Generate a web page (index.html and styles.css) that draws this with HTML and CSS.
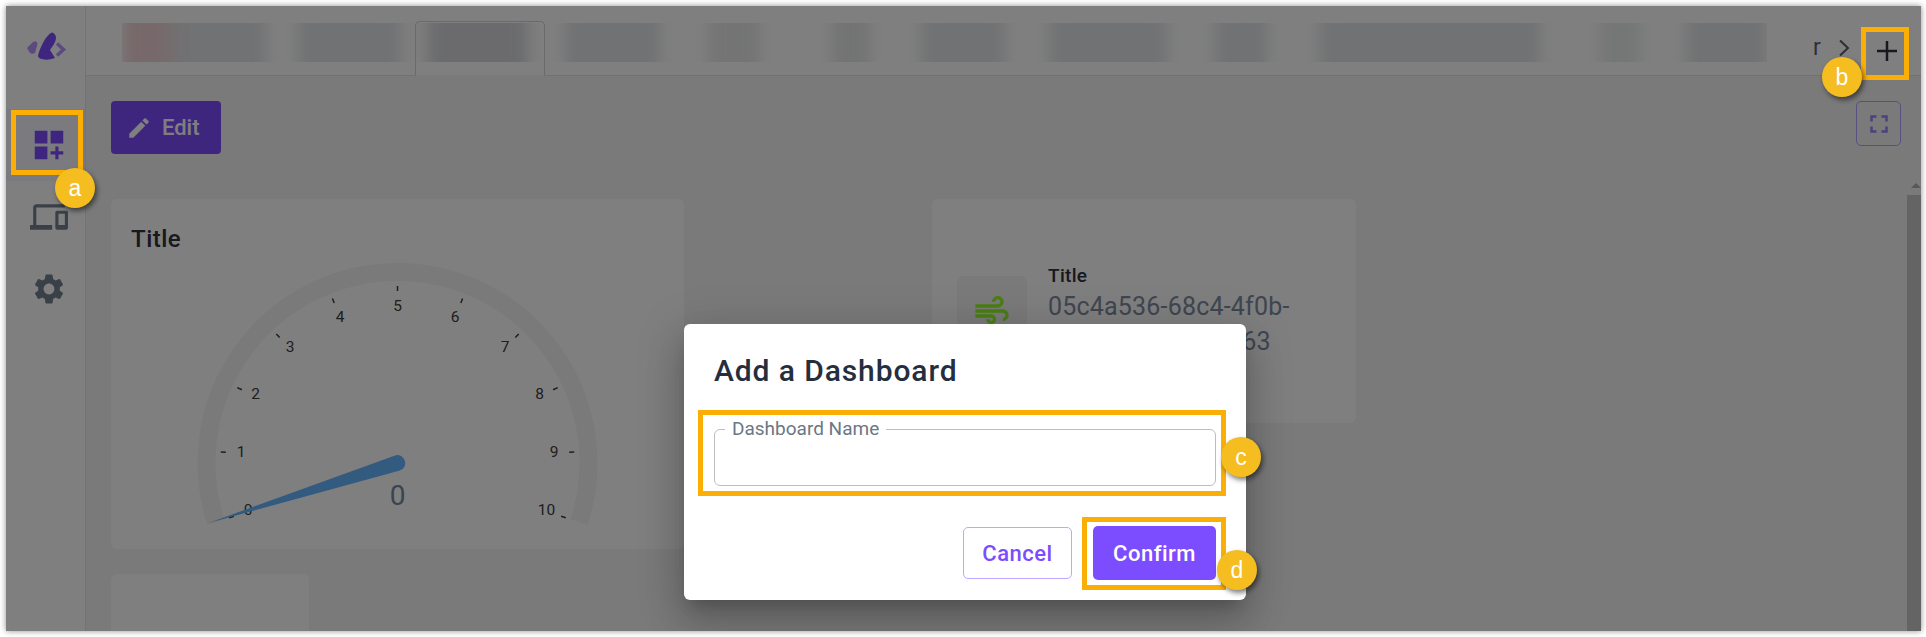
FILE: index.html
```html
<!DOCTYPE html>
<html lang="en">
<head>
  <meta charset="UTF-8" />
  <title>Add a Dashboard</title>
  <link rel="stylesheet" href="styles.css">
</head>
<body>
  <div class="frame">
    <aside class="sidebar">
      <div class="logo">
        <svg width="70" height="60" viewBox="0 0 70 60">
          <path class="logo-light" d="M16 28 L22 22 Q26 20 26.500 24 L24 33 Q21 34.500 19 33 Z"/>
          <path class="logo-dark" d="M27 36 Q28 30 33 21 Q37 14 41 12.500 Q44 13 45 17 Q45 22 41 27 L39 30 L44 38 Q36 41 31 39 Q28 39 27 36 Z"/>
          <path class="logo-chevron" d="M46 23.500 L52.500 29.500 L46 35.500"/>
        </svg>
      </div>
      <a class="nav-item active">
        <svg width="38" height="38" viewBox="0 0 24 24"><path d="M3 3h8v8H3zm10 0h8v8h-8zM3 13h8v8H3zm15 0h-2v3h-3v2h3v3h2v-3h3v-2h-3z"/></svg>
      </a>
      <a class="nav-item">
        <svg width="38" height="38" viewBox="0 0 24 24"><path d="M4 6h18V4H4c-1.100 0-2 .9-2 2v11H0v3h14v-3H4V6zm19 2h-6c-.55 0-1 .45-1 1v10c0 .55.45 1 1 1h6c.55 0 1-.45 1-1V9c0-.55-.45-1-1-1zm-1 9h-4v-7h4v7z"/></svg>
      </a>
      <a class="nav-item">
        <svg width="36" height="36" viewBox="0 0 24 24"><path d="M19.140 12.940c.04-.3.06-.61.06-.94 0-.32-.02-.64-.07-.94l2.030-1.580c.18-.14.23-.41.12-.61l-1.920-3.320c-.12-.22-.37-.29-.59-.22l-2.390.96c-.5-.38-1.030-.7-1.620-.94l-.36-2.540c-.04-.24-.24-.41-.48-.41h-3.840c-.24 0-.43.17-.47.41l-.36 2.540c-.59.24-1.130.57-1.620.94l-2.390-.96c-.22-.08-.47 0-.59.22L2.740 8.870c-.12.21-.08.47.12.61l2.030 1.580c-.05.3-.09.63-.09.94s.02.64.07.94l-2.030 1.580c-.18.14-.23.41-.12.61l1.920 3.320c.12.22.37.29.59.22l2.390-.96c.5.38 1.030.7 1.620.94l.36 2.540c.05.24.24.41.48.41h3.840c.24 0 .44-.17.47-.41l.36-2.540c.59-.24 1.130-.56 1.620-.94l2.390.96c.22.08.47 0 .59-.22l1.920-3.320c.12-.22.07-.47-.12-.61l-2.010-1.580zM12 15.600c-1.980 0-3.600-1.620-3.600-3.600s1.620-3.600 3.600-3.600 3.600 1.620 3.600 3.600-1.620 3.600-3.600 3.600z"/></svg>
      </a>
    </aside>

    <main class="main">
      <header class="tabbar">
        <div class="tabs">
          <span class="blob t1"></span>
          <span class="blob t2"></span>
          <span class="blob t3"></span>
          <span class="blob t4"></span>
          <span class="blob t5"></span>
          <span class="blob t6"></span>
          <span class="blob t7"></span>
          <span class="blob t8"></span>
          <span class="blob t9"></span>
          <span class="blob t10"></span>
          <span class="blob t11"></span>
          <span class="blob t12"></span>
        </div>
        <span class="tab-rest">r</span>
        <svg class="tab-next" width="12" height="18" viewBox="0 0 12 18"><path d="M2 1.500 L10 9 L2 16.500"/></svg>
        <svg class="tab-add" width="22" height="22" viewBox="0 0 22 22"><path d="M11 1 V21 M1 11 H21"/></svg>
        <span class="tab-active"></span>
      </header>

      <div class="toolbar">
        <button class="btn-edit">
          <svg width="26" height="26" viewBox="0 0 24 24"><path d="M3 17.250V21h3.750L17.810 9.940l-3.750-3.750L3 17.250zM20.710 7.040c.39-.39.39-1.020 0-1.410l-2.340-2.340c-.39-.39-1.020-.39-1.410 0l-1.830 1.830 3.750 3.750 1.830-1.830z"/></svg>
          Edit
        </button>
        <button class="btn-full">
          <svg width="30" height="30" viewBox="0 0 24 24"><path d="M7 14H5v5h5v-2H7v-3zm-2-4h2V7h3V5H5v5zm12 7h-3v2h5v-5h-2v3zM14 5v2h3v3h2V5h-5z"/></svg>
        </button>
      </div>

      <div class="widgets">
        <section class="card card-gauge">
          <h3>Title</h3>
          <svg class="gauge" width="573" height="297" viewBox="-286.500 -211 573 297">
            <path class="track" d="M-181.650 59.020 A191 191 0 1 1 181.650 59.020"/>
            <path class="ticks" d="M-163.600 53.200 L-168.300 54.700 M-171.700 -10.800 L-176.700 -11.100 M-155.600 -73.200 L-160.200 -75.400 M-117.800 -125.400 L-121.200 -129 M-63.300 -160 L-65.100 -164.600 M0 -172 L0 -177 M63.300 -160 L65.100 -164.600 M117.800 -125.400 L121.200 -129 M155.600 -73.200 L160.200 -75.400 M171.700 -10.800 L176.700 -11.100 M163.600 53.200 L168.300 54.700"/>
            <g class="labels">
              <text x="-149.500" y="47">0</text>
              <text x="-156.500" y="-11">1</text>
              <text x="-142" y="-69">2</text>
              <text x="-107.500" y="-116">3</text>
              <text x="-57.500" y="-146">4</text>
              <text x="0" y="-157">5</text>
              <text x="57.500" y="-146">6</text>
              <text x="107.500" y="-116">7</text>
              <text x="142" y="-69">8</text>
              <text x="156.500" y="-11">9</text>
              <text x="149" y="47">10</text>
            </g>
            <path class="needle" d="M-189 60 L-2.420 -7.620 A8 8 0 0 1 2.420 7.620 Z"/>
            <text class="gauge-value" x="0" y="32">0</text>
          </svg>
        </section>

        <section class="card card-info">
          <div class="info-icon">
            <svg width="40" height="40" viewBox="0 0 24 24"><path d="M14.500 17c0 1.650-1.350 3-3 3s-3-1.350-3-3h2c0 .55.45 1 1 1s1-.45 1-1-.45-1-1-1H2v-2h9.500c1.650 0 3 1.350 3 3zM19 6.500C19 4.570 17.430 3 15.500 3S12 4.570 12 6.500h2c0-.83.67-1.500 1.500-1.500s1.500.67 1.500 1.500S16.330 8 15.500 8H2v2h13.500c1.930 0 3.500-1.570 3.500-3.500zm-.5 4.500H2v2h16.500c.83 0 1.500.67 1.500 1.500s-.67 1.500-1.500 1.500v2c1.930 0 3.500-1.570 3.500-3.500S20.430 11 18.500 11z"/></svg>
          </div>
          <div class="info-text">
            <h4>Title</h4>
            <p>05c4a536-68c4-4f0b-9f3e-27c1d04b8f63</p>
          </div>
        </section>

        <section class="card card-small"></section>
      </div>

      <div class="scrollbar">
        <span class="scroll-arrow"></span>
        <span class="scroll-thumb"></span>
      </div>
    </main>

    <div class="overlay"></div>

    <div class="modal">
      <h2>Add a Dashboard</h2>
      <div class="field">
        <label for="dash_name">Dashboard Name</label>
        <input type="text" id="dash_name" />
      </div>
      <div class="actions">
        <button class="btn-cancel">Cancel</button>
        <button class="btn-confirm">Confirm</button>
      </div>
    </div>

    <span class="mark mark-a"></span>
    <span class="mark mark-b"></span>
    <span class="mark mark-c"></span>
    <span class="mark mark-d"></span>
    <span class="badge badge-a">a</span>
    <span class="badge badge-b">b</span>
    <span class="badge badge-c">c</span>
    <span class="badge badge-d">d</span>
  </div>
</body>
</html>
```

FILE: styles.css
```css
* {
  box-sizing: border-box;
}
html, body {
  margin: 0;
  height: 637px;
  overflow: hidden;
  background: #fff;
}
body {
  padding: 6px 5px 6px 6px;
  font-family: Roboto, "Liberation Sans", sans-serif;
}
.frame {
  position: relative;
  display: flex;
  height: 625px;
  overflow: hidden;
  background: #f4f4f4;
}
body::before {
  content: "";
  position: absolute;
  left: 6px;
  top: 6px;
  width: 1915px;
  height: 625px;
  box-shadow: 0 0 6px rgba(0,0,0,0.45);
}

/* sidebar */
.sidebar {
  flex: 0 0 80px;
  background: #fff;
  border-right: 1px solid #e6e6e6;
}
.logo {
  display: flex;
  justify-content: center;
  align-items: center;
  height: 88px;
  margin-bottom: 15px;
}
.logo-light {
  fill: #b894ff;
}
.logo-dark {
  fill: #7c4dff;
}
.logo-chevron {
  fill: none;
  stroke: #b894ff;
  stroke-width: 3.500;
}
.nav-item {
  display: flex;
  align-items: center;
  justify-content: center;
  height: 72px;
  padding-left: 6px;
  fill: #75808e;
}
.nav-item.active {
  background: #f7f5ff;
  fill: #7c4dff;
}

/* tabs */
.main {
  position: relative;
  flex: 1;
  min-width: 0;
}
.tabbar {
  position: relative;
  display: flex;
  align-items: center;
  height: 70px;
  background: #fff;
  border-bottom: 1px solid #e2e2e2;
  padding: 2px 0 0 36px;
}
.tabs {
  display: flex;
  width: 1645px;
  height: 39px;
  margin-top: 1px;
  overflow: hidden;
  align-items: center;
}
.blob {
  flex: none;
  height: 70px;
  background: #e2e4e7;
  filter: blur(8px);
}
.t1 { width: 144px; background: linear-gradient(90deg, #efd2d5 0, #efd2d5 26%, #e2e4e7 42%); }
.t2 { width: 103px; margin-left: 32px; }
.t3 { width: 101px; margin-left: 26px; background: #d6d7da; }
.t4 { width: 95px; margin-left: 37px; }
.t5 { width: 52px; margin-left: 48px; background: #e8e9e9; }
.t6 { width: 38px; margin-left: 72px; background: #e6e7e7; }
.t7 { width: 84px; margin-left: 51px; }
.t8 { width: 118px; margin-left: 44px; }
.t9 { width: 52px; margin-left: 48px; }
.t10 { width: 221px; margin-left: 52px; }
.t11 { width: 40px; margin-left: 60px; background: #eaecec; }
.t12 { width: 80px; margin-left: 46px; }
.tab-rest {
  margin: 12px 0 0 46px;
  font-size: 23px;
  color: #566276;
}
.tab-next {
  margin: 12px 0 0 17px;
  fill: none;
  stroke: #5a5a66;
  stroke-width: 2;
}
.tab-add {
  margin: 18px 0 0 26px;
  fill: none;
  stroke: #30303e;
  stroke-width: 2.500;
}
.tab-active {
  position: absolute;
  left: 329px;
  top: 15px;
  width: 130px;
  height: 55px;
  border: 1px solid #d4d4d4;
  border-bottom: 1px solid #f4f4f4;
  border-radius: 5px 5px 0 0;
}

/* toolbar */
.toolbar {
  display: flex;
  justify-content: space-between;
  padding: 25px 20px 0 25px;
  align-items: flex-start;
}
.btn-edit {
  display: flex;
  align-items: center;
  gap: 10px;
  width: 110px;
  height: 53px;
  padding: 0 0 0 15px;
  border: none;
  border-radius: 4px;
  background: #7c4dff;
  color: #fff;
  fill: #fff;
  font: 500 22px Roboto, sans-serif;
}
.btn-full {
  display: flex;
  align-items: center;
  justify-content: center;
  width: 45px;
  height: 45px;
  padding: 0;
  background: transparent;
  border: 1px solid #b4a0ff;
  border-radius: 5px;
  fill: #9a80ff;
}

/* dashboard */
.widgets {
  display: grid;
  grid-template-columns: 573px 424px;
  column-gap: 248px;
  row-gap: 25px;
  padding: 45px 0 0 25px;
  align-items: start;
}
.card {
  background: #fff;
  border-radius: 6px;
}
.card-gauge {
  height: 350px;
}
.card-gauge h3 {
  margin: 0;
  padding: 27px 0 0 20px;
  font-size: 24px;
  font-weight: 500;
  letter-spacing: 0.5px;
  line-height: 26px;
  color: #30303e;
}
.gauge {
  display: block;
}
.track {
  fill: none;
  stroke: #f4f4f4;
  stroke-width: 18;
}
.ticks {
  fill: none;
  stroke: #3c3c3c;
  stroke-width: 1.500;
}
.labels text {
  font-size: 15.500px;
  fill: #3c3c3c;
  text-anchor: middle;
  dominant-baseline: central;
}
.needle {
  fill: #66b4ff;
}
.gauge-value {
  font-size: 28px;
  fill: #7886a0;
  text-anchor: middle;
  dominant-baseline: central;
}
.card-info {
  display: flex;
  align-items: center;
  gap: 21px;
  height: 224px;
  padding-left: 25px;
}
.info-icon {
  display: flex;
  align-items: center;
  justify-content: center;
  flex: none;
  width: 70px;
  height: 70px;
  background: #f5f5f6;
  border-radius: 5px;
  fill: #94fc28;
}
.info-text {
  width: 270px;
}
.info-text h4 {
  margin: 0;
  font-size: 19px;
  font-weight: 500;
  letter-spacing: 0.3px;
  line-height: 26px;
  color: #30303e;
}
.info-text p {
  margin: 0;
  font-size: 25px;
  letter-spacing: 0.2px;
  line-height: 35px;
  color: #808ca0;
}
.card-small {
  width: 198px;
  height: 200px;
}
.scrollbar {
  position: absolute;
  right: 0;
  top: 177px;
  width: 14px;
  height: 448px;
  display: flex;
  flex-direction: column;
  align-items: center;
}
.scroll-arrow {
  margin-left: 4px;
  width: 0;
  height: 0;
  border-left: 5px solid transparent;
  border-right: 5px solid transparent;
  border-bottom: 5px solid #b0b0b0;
  margin-bottom: 7px;
}
.scroll-thumb {
  flex: 1;
  width: 100%;
  background: #c8c8c8;
}

/* dialog */
.overlay {
  position: absolute;
  inset: 0;
  background: rgba(0,0,0,0.5);
}
.modal {
  position: absolute;
  left: 678px;
  top: 318px;
  width: 562px;
  height: 276px;
  padding: 30px 30px 0;
  background: #fff;
  border-radius: 6px;
  box-shadow: 0 11px 15px -7px rgba(0,0,0,0.2), 0 24px 38px 3px rgba(0,0,0,0.14), 0 9px 46px 8px rgba(0,0,0,0.12);
}
.modal h2 {
  margin: 0;
  font-size: 30px;
  font-weight: 500;
  letter-spacing: 0.9px;
  line-height: 34px;
  color: #242e3f;
}
.field {
  position: relative;
  margin-top: 41px;
}
.field label {
  position: absolute;
  left: 11px;
  top: -10px;
  padding: 0 7px;
  background: #fff;
  font-size: 19px;
  line-height: 20px;
  color: #6b7785;
}
.field input {
  display: block;
  width: 100%;
  height: 57px;
  border: 1px solid #bdbdbd;
  border-radius: 6px;
  background: #fff;
}
.actions {
  display: flex;
  justify-content: flex-end;
  align-items: center;
  gap: 21px;
  margin-top: 40px;
}
.actions button {
  font: 500 22px Roboto, sans-serif;
  letter-spacing: 0.5px;
  border-radius: 5px;
  padding: 0;
}
.btn-cancel {
  width: 109px;
  height: 52px;
  background: #fff;
  border: 1px solid #bda8ff;
  color: #7c4dff;
}
.btn-confirm {
  width: 123px;
  height: 54px;
  background: #7c4dff;
  border: none;
  color: #fff;
}

/* screenshot annotations */
.mark {
  position: absolute;
  border: 5px solid #fbae05;
}
.mark-a { left: 5px; top: 104px; width: 72px; height: 65px; }
.mark-b { left: 1855px; top: 21px; width: 48px; height: 53px; }
.mark-c { left: 692px; top: 404px; width: 528px; height: 86px; }
.mark-d { left: 1076px; top: 511px; width: 144px; height: 73px; }
.badge {
  position: absolute;
  display: flex;
  align-items: center;
  justify-content: center;
  width: 40px;
  height: 40px;
  border-radius: 50%;
  background: #f5bd20;
  box-shadow: 2px 3px 5px rgba(0,0,0,0.5);
  font-family: "Liberation Sans", sans-serif;
  font-size: 23px;
  color: #fff;
}
.badge-a { left: 49px; top: 162px; }
.badge-b { left: 1816px; top: 51px; }
.badge-c { left: 1215px; top: 431px; }
.badge-d { left: 1211px; top: 544px; }
```
